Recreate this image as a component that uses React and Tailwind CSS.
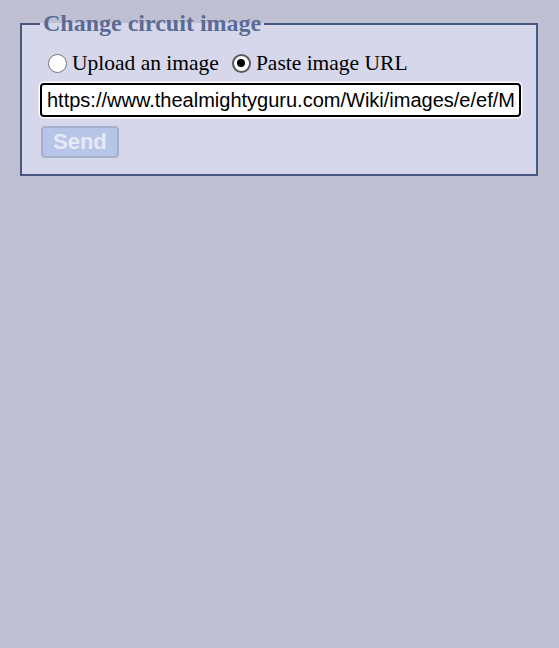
import React, { useState } from 'react';

const Radio = ({ checked, onClick, label }) => (
    <label className="flex items-center cursor-pointer" onClick={onClick}>
        {checked ? (
            <span className="w-[19px] h-[19px] rounded-full border-[2.5px] border-[#5a5a5a] bg-white flex items-center justify-center">
                <span className="w-[8px] h-[8px] rounded-full bg-black" />
            </span>
        ) : (
            <span className="w-[19px] h-[19px] rounded-full border-[1.5px] border-[#767676] bg-white" />
        )}
        <span className="ml-[5px]">{label}</span>
    </label>
);

export default function App() {
    const [mode, setMode] = useState('url');
    const [url, setUrl] = useState('https://www.thealmightyguru.com/Wiki/images/e/ef/Mario.png');

    return (
        <div className="min-h-screen bg-[#bec0d1] px-[20px] pt-[10px]">
            <fieldset className="border-2 border-[#48577f] bg-[#d6d7eb] pl-[18px] pr-[15px] pt-[14px] pb-[16px] w-[518px]">
                <legend className="px-[3px] text-[24px] font-bold text-[#5b6b94] leading-[27px]" style={{ fontFamily: '"Liberation Serif", serif' }}>
                    Change circuit image
                </legend>

                <div className="flex items-center text-[21.5px] text-black leading-[24px]" style={{ fontFamily: '"Liberation Serif", serif' }}>
                    <div className="pl-[8px]">
                        <Radio checked={mode === 'upload'} onClick={() => setMode('upload')} label="Upload an image" />
                    </div>
                    <div className="ml-[13px]">
                        <Radio checked={mode === 'url'} onClick={() => setMode('url')} label="Paste image URL" />
                    </div>
                </div>

                <input
                    type="text"
                    value={url}
                    onChange={(e) => setUrl(e.target.value)}
                    className="mt-[8px] block w-full h-[34px] bg-white border-2 border-black rounded-[4px] pl-[5px] pr-[3px] text-[20px] text-black outline-none shadow-[0_0_0_1.5px_#ffffff]"
                    style={{ fontFamily: '"Liberation Sans", Arial, sans-serif' }}
                />

                <button
                    disabled
                    className="mt-[9px] ml-px h-[32px] px-[10px] border-2 border-[#a6b0cc] bg-[#b7c5e8] rounded-[4px] text-[22px] font-bold text-[#e6e9f6] leading-none"
                    style={{ fontFamily: '"Liberation Sans", Arial, sans-serif' }}
                >
                    Send
                </button>
            </fieldset>
        </div>
    );
}
